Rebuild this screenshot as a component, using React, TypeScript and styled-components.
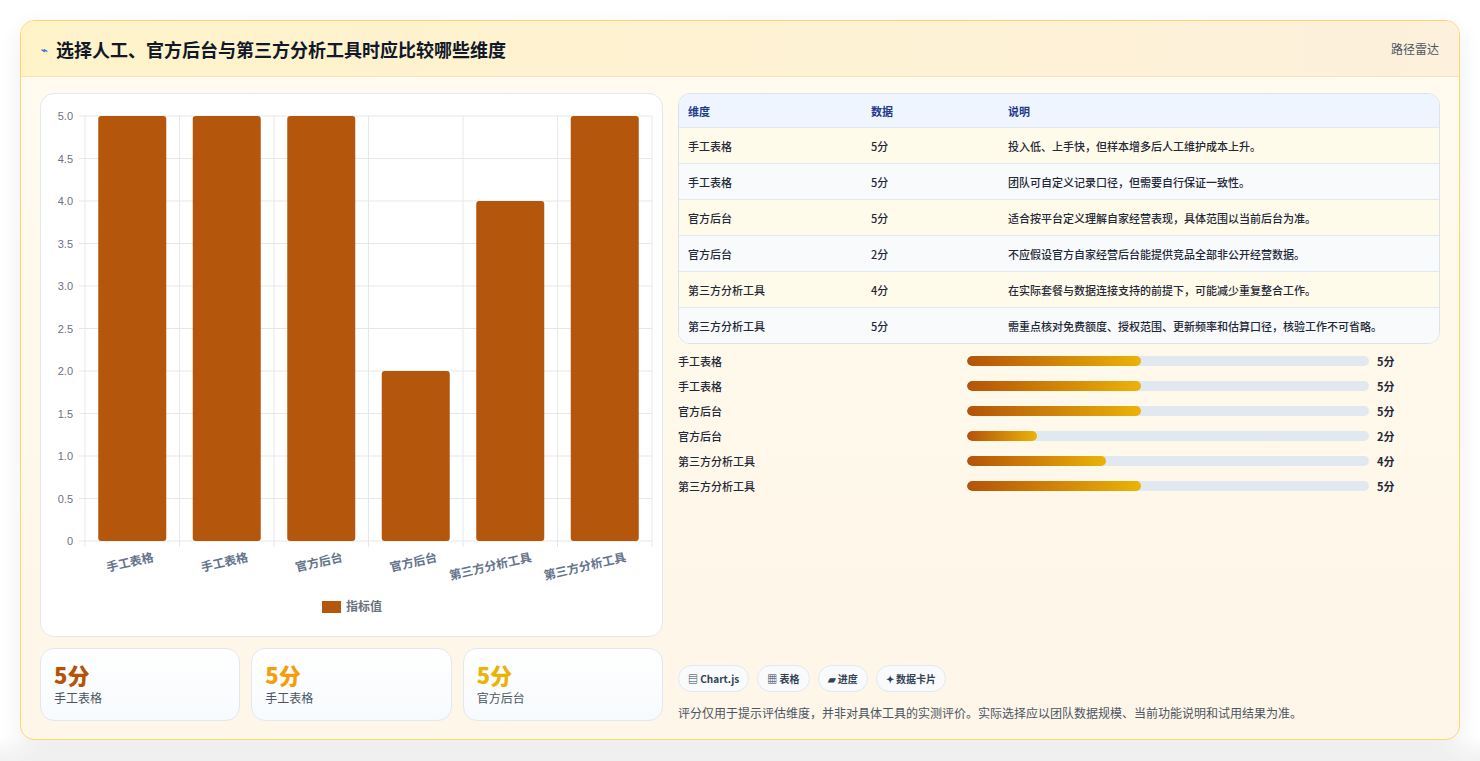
import React from "react";
import styled, { createGlobalStyle } from "styled-components";

const Global = createGlobalStyle`
  body { margin: 0; background: #fff; font-family: "Noto Sans CJK SC", "Noto Sans", sans-serif; color: #1f2937; }
`;

const Page = styled.div`padding: 20px 20px 20px 20px; height: 761px; box-sizing: border-box; background: linear-gradient(#fff 0 735px, #f1f1f1);`;
const Card = styled.div`
  border: 1px solid #f7d774; border-radius: 14px; overflow: hidden;
  background: linear-gradient(180deg, #fffbee, #fef6e8);
  box-shadow: 0 8px 24px rgba(0,0,0,0.07); height: 720px; box-sizing: border-box;
  display: flex; flex-direction: column;
`;
const Header = styled.div`
  height: 56px; box-sizing: border-box; display: flex; align-items: center; justify-content: space-between;
  padding: 0 20px; background: linear-gradient(90deg, #fef3c9, #fdf0dc); border-bottom: 1px solid #f3e3c0;
`;
const Title = styled.h1`margin: 0; font-size: 18px; font-weight: 700; color: #111827; display: flex; align-items: center; gap: 8px;`;
const Icon = styled.span`font-size: 11px; color: #3b6fd8;`;
const Brand = styled.span`font-size: 12px; color: #4b5563;`;
const Body = styled.div`flex: 1; display: grid; grid-template-columns: 623px 1fr; gap: 15px; padding: 16px 19px 18px 19px;`;
const Col = styled.div`display: flex; flex-direction: column; gap: 11px;`;
const ChartCard = styled.div`height: 544px; box-sizing: border-box; background: #fff; border: 1px solid #e5e7eb; border-radius: 14px;`;
const Stats = styled.div`display: grid; grid-template-columns: repeat(3, 1fr); gap: 11px;`;
const Stat = styled.div`height: 73px; box-sizing: border-box; background: linear-gradient(#fff, #f7fafd); border: 1px solid #e2e8f0; border-radius: 14px; padding: 10px 13px;`;
const StatNum = styled.div<{ c: string }>`font-size: 22px; font-weight: 800; color: ${p => p.c}; line-height: 30px;`;
const StatLbl = styled.div`font-size: 12px; color: #4b5563;`;
const Table = styled.div`border: 1px solid #dbe2ea; border-radius: 12px; overflow: hidden; background: #fff;`;
const Row = styled.div<{ head?: boolean; alt?: boolean }>`
  display: grid; grid-template-columns: 183px 137px 1fr; height: ${p => p.head ? 33 : 35}px; align-items: center; padding-left: 9px;
  font-size: 11px; font-weight: ${p => p.head ? 700 : 500};
  color: ${p => p.head ? "#1e3a8a" : "#1f2937"};
  background: ${p => p.head ? "#eef5fe" : p.alt ? "#f8fafc" : "#fffbeb"};
  border-top: ${p => p.head ? "none" : "1px solid #e2e8f0"};
`;
const Bars = styled.div`display: flex; flex-direction: column; gap: 8px; margin-top: 8px;`;
const BarRow = styled.div`display: grid; grid-template-columns: 289px 402px 1fr; align-items: center; height: 17px; font-size: 11px; font-weight: 500;`;
const Track = styled.div`height: 10px; border-radius: 5px; background: #e2e8f0; overflow: hidden;`;
const Fill = styled.div`height: 100%; border-radius: 5px; background: linear-gradient(90deg, #b45309, #eab308);`;
const Val = styled.span`padding-left: 8px; font-weight: 700;`;
const Spacer = styled.div`flex: 1;`;
const Chips = styled.div`display: flex; gap: 8px;`;
const Chip = styled.span`height: 27px; box-sizing: border-box; padding: 0 9px; display: inline-flex; align-items: center; gap: 3px; border: 1px solid #e2e8f0; border-radius: 14px; background: #f8fafc; font-size: 10px; font-weight: 600; color: #334155;`;
const Note = styled.p`margin: 12px 0 0; font-size: 12px; color: #4b5563;`;

const data = [
  ["手工表格", 5, "投入低、上手快，但样本增多后人工维护成本上升。"],
  ["手工表格", 5, "团队可自定义记录口径，但需要自行保证一致性。"],
  ["官方后台", 5, "适合按平台定义理解自家经营表现，具体范围以当前后台为准。"],
  ["官方后台", 2, "不应假设官方自家经营后台能提供竞品全部非公开经营数据。"],
  ["第三方分析工具", 4, "在实际套餐与数据连接支持的前提下，可能减少重复整合工作。"],
  ["第三方分析工具", 5, "需重点核对免费额度、授权范围、更新频率和估算口径，核验工作不可省略。"],
] as const;

function Chart() {
  const x0 = 44, x1 = 611, y0 = 22, y1 = 447;
  const w = (x1 - x0) / 6;
  const ticks = [0, 0.5, 1, 1.5, 2, 2.5, 3, 3.5, 4, 4.5, 5];
  return (
    <svg width="623" height="544" style={{ display: "block" }}>
      {ticks.map(t => {
        const y = y1 - (t / 5) * (y1 - y0);
        return <g key={t}>
          <line x1={x0 - 6} x2={x1} y1={y} y2={y} stroke="#e5e7eb" />
          <text x={x0 - 12} y={y + 4} fontSize="11" textAnchor="end" fill="#6b7280" fontFamily="Liberation Sans">{t === 0 ? "0" : t.toFixed(1)}</text>
        </g>;
      })}
      {Array.from({ length: 7 }).map((_, i) => <line key={i} x1={x0 + i * w} x2={x0 + i * w} y1={y0} y2={y1 + 6} stroke="#e5e7eb" />)}
      {data.map((d, i) => {
        const h = (d[1] / 5) * (y1 - y0);
        const cx = x0 + w * i + w / 2;
        return <g key={i}>
          <rect x={cx - 34} y={y1 - h} width="68" height={h} rx="3" fill="#b4560b" />
          <text transform={`translate(${cx + 22},${y1 + 20}) rotate(-13)`} fontSize="12" fontWeight="700" textAnchor="end" fill="#64748b">{d[0]}</text>
        </g>;
      })}
      <rect x="281" y="507" width="19" height="12" fill="#b4560b" />
      <text x="305" y="517" fontSize="12" fontWeight="600" fill="#6b7280">指标值</text>
    </svg>
  );
}

export default function App() {
  return (
    <Page>
      <Global />
      <Card>
        <Header>
          <Title><Icon>⌁</Icon>选择人工、官方后台与第三方分析工具时应比较哪些维度</Title>
          <Brand>路径雷达</Brand>
        </Header>
        <Body>
          <Col>
            <ChartCard><Chart /></ChartCard>
            <Stats>
              <Stat><StatNum c="#b45309">5分</StatNum><StatLbl>手工表格</StatLbl></Stat>
              <Stat><StatNum c="#f59e0b">5分</StatNum><StatLbl>手工表格</StatLbl></Stat>
              <Stat><StatNum c="#eab308">5分</StatNum><StatLbl>官方后台</StatLbl></Stat>
            </Stats>
          </Col>
          <Col style={{ gap: 0 }}>
            <Table>
              <Row head><span>维度</span><span>数据</span><span>说明</span></Row>
              {data.map((d, i) => <Row key={i} alt={i % 2 === 1}><span>{d[0]}</span><span>{d[1]}分</span><span>{d[2]}</span></Row>)}
            </Table>
            <Bars>
              {data.map((d, i) => <BarRow key={i}><span>{d[0]}</span><Track><Fill style={{ width: `${d[1] * 8.66}%` }} /></Track><Val>{d[1]}分</Val></BarRow>)}
            </Bars>
            <Spacer />
            <Chips>
              <Chip>▤ Chart.js</Chip><Chip>▦ 表格</Chip><Chip>▰ 进度</Chip><Chip>✦ 数据卡片</Chip>
            </Chips>
            <Note>评分仅用于提示评估维度，并非对具体工具的实测评价。实际选择应以团队数据规模、当前功能说明和试用结果为准。</Note>
          </Col>
        </Body>
      </Card>
    </Page>
  );
}
